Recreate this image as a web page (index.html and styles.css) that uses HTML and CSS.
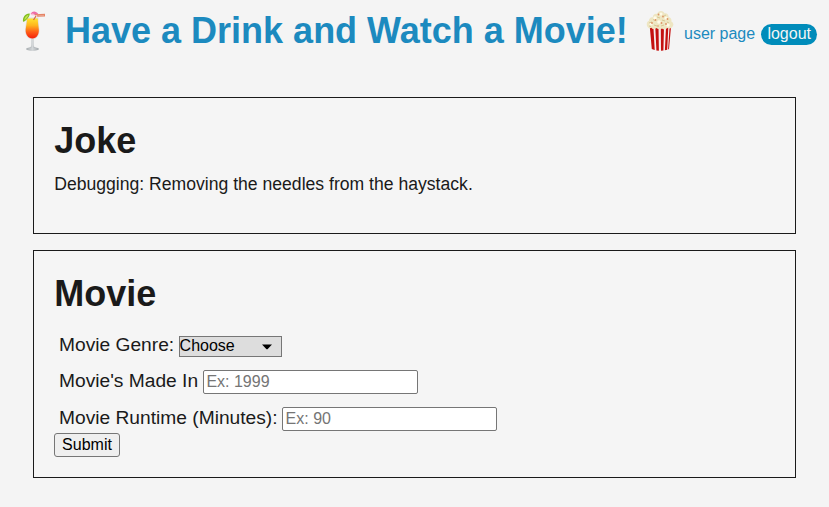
FILE: index.html
```html
<!DOCTYPE html>
<html lang="en">
<head>
<meta charset="utf-8">
<title>Have a Drink and Watch a Movie!</title>
<link rel="stylesheet" href="styles.css">
</head>
<body>
<header class="header">
  <svg class="drink" viewBox="0 0 24 42" aria-hidden="true">
    <defs>
      <linearGradient id="juice" x1="0" y1="0" x2="0" y2="1">
        <stop offset="0" stop-color="#ffe52e"/><stop offset=".35" stop-color="#ffb51d"/><stop offset=".65" stop-color="#ff6318"/><stop offset="1" stop-color="#f51f0b"/>
      </linearGradient>
      <linearGradient id="stem" x1="0" x2="1"><stop offset="0" stop-color="#a5abae"/><stop offset=".5" stop-color="#d4d7d9"/><stop offset="1" stop-color="#9fa5a9"/></linearGradient>
    </defs>
    <ellipse cx="11.500" cy="39" rx="6.400" ry="1.900" fill="url(#stem)"/>
    <path d="M10.400 28.500h2.200l.1 6c0 2 .7 3 2.200 3.500H8.100c1.500-.5 2.200-1.500 2.200-3.500z" fill="url(#stem)"/>
    <path d="M5.400 7.500h12c0 5 .7 8 1 12 .4 5.500-2.500 9.700-7 9.700S3.700 25 4.100 19.500c.3-4 1.300-7 1.300-12z" fill="#dedcd8"/>
    <path d="M6 8.500h10.800c0 5 .7 7.500 1 11 .4 5-2.200 8.900-6.400 8.900S4.300 24.500 4.700 19.500c.3-3.500 1.300-6 1.300-11z" fill="url(#juice)"/>
    <path d="M12.500 10l2.500-4" stroke="#d8664c" stroke-width="1.300"/>
    <path d="M2 11.800C1.500 7 4.300 3.200 8.700 3.500c.3 1.800-1 3.500-2.400 5.200-1.200 1.500-2.600 2.700-4.300 3.100z" fill="#7fbd1d"/>
    <path d="M3.400 10.200c0-2.700 1.600-4.800 4.200-5.400-.6 1.900-2.200 4.300-4.200 5.400z" fill="#c3e453"/>
    <path d="M9.500 4C11.500.5 15 .8 17.400 4.300l-3.400.7z" fill="#ee6da5"/>
    <path d="M9.500 4c1.800-1 3.500-.7 4.500 1.500l-3.500-.2z" fill="#fbc0d6"/>
    <path d="M14 4.800l9.600-.4v1.400l-7.500.4" fill="none" stroke="#e58466" stroke-width="1.200"/>
  </svg>
  <h1 class="title">Have a Drink and Watch a Movie!</h1>
  <svg class="popcorn" viewBox="0 0 28 42" aria-hidden="true">
    <path d="M3.800 17h21.200l-2 22Q14.400 42.500 5.800 39z" fill="#f7eeee"/>
    <path d="M3.800 17h3.600l1.300 23q-1.700-.4-2.900-1zM9.300 17h3.200l.4 23.700-2.500-.3zM14.800 17H18l-.6 23.500-2.400.2zM20 17h2.300l-1.100 22.700-2.300.5zM23.600 17H25l-2 22-.9.400z" fill="#c4110f"/>
    <path d="M2.300 17.700C-.2 15.500.6 11.300 3 10.700c-.2-2.300 2-3.900 3.800-3.300.1-2.800 2.200-4.100 4.200-3.400 1.200-3.400 5.700-4.400 7.500-.7 2.600-.6 4.500 1.300 4 3.900 2.500.2 3.400 2.200 2.800 4.200 2.500 1.200 2.800 4.500.5 6.100-1.200 1.300-3.400 1.300-4.500.6-1.500 1.600-4 1.600-5.300.3-2 1.300-4.300 1-5.500-.3-2.400 1.500-4.200 1-5-.3-1.300.7-2.300.5-3.200-.1z" fill="#eee6c3"/>
    <g fill="#fffbe8"><circle cx="9" cy="8" r="1.700"/><circle cx="15" cy="4" r="1.500"/><circle cx="20" cy="8" r="1.600"/><circle cx="5" cy="14" r="1.600"/><circle cx="13" cy="12" r="1.800"/><circle cx="22" cy="15" r="1.700"/></g>
    <path d="M3 13l3-1M7 9.500l2 1M11 7l3 1M18 6l2-1M16 10l3 1M8 15l3 1M15 16l3-1M21 12l2 1M3 16l2 .5" fill="none" stroke="#d0c088" stroke-width=".8"/>
    <g fill="#dc9464"><circle cx="12.500" cy="4.500" r=".9"/><circle cx="17" cy="6.500" r=".9"/><circle cx="21.500" cy="9" r=".9"/><circle cx="9.500" cy="10" r=".9"/><circle cx="15.500" cy="13" r=".9"/><circle cx="6" cy="13" r=".9"/><circle cx="20" cy="14" r=".9"/><circle cx="12" cy="16" r=".8"/></g>
  </svg>
  <a class="user">user page</a>
  <a class="logout">logout</a>
</header>
<main>
  <section class="card joke">
    <h2>Joke</h2>
    <p>Debugging: Removing the needles from the haystack.</p>
  </section>
  <section class="card movie">
    <h2>Movie</h2>
    <form>
      <div class="row genre"><label for="genre">Movie Genre:</label>
        <div class="select" id="genre"><span>Choose</span><svg viewBox="0 0 10 6" aria-hidden="true"><path d="M0 .5h10L5.500 5.200h-1z"/></svg></div>
      </div>
      <div class="row year"><label for="year">Movie's Made In</label><input id="year" placeholder="Ex: 1999"></div>
      <div class="row runtime"><label for="runtime">Movie Runtime (Minutes):</label><input id="runtime" placeholder="Ex: 90"></div>
      <button type="button">Submit</button>
    </form>
  </section>
</main>
</body>
</html>
```
FILE: styles.css
```css
* { box-sizing: border-box; }
body {
  margin: 0;
  background: #f4f4f4;
  color: #1a1a1a;
  font: 16px "Liberation Sans", Arial, sans-serif;
}
.header {
  display: flex;
  align-items: flex-start;
  height: 97px;
  padding: 10px 0 0 21px;
  color: #1c8abf;
}
.drink { width: 24px; height: 42px; }
.title {
  margin: 0 0 0 20px;
  width: 563px;
  font-size: 36px;
  line-height: 41px;
  white-space: nowrap;
}
.popcorn { width: 28px; height: 42px; margin-left: 18px; }
.user { margin: 15px 0 0 10px; line-height: 18px; white-space: nowrap; }
.logout {
  margin: 14px 0 0 6px;
  width: 56px;
  height: 21px;
  border-radius: 11px;
  background: #008cba;
  color: #f4f4f4;
  line-height: 20px;
  text-align: center;
}
.card {
  margin: 0 33px 16px;
  padding: 22px 20px 0;
  border: 1px solid #1a1a1a;
  background: #f5f5f5;
}
.joke { height: 137px; }
.movie { height: 228px; }
h2 { margin: 0; padding-left: 0.2px; font-size: 36px; line-height: 41px; }
p { margin: 13px 0 0; padding-left: 0.2px; font-size: 17.6px; line-height: 20px; }
form { padding-top: 21px; }
.row { display: flex; padding-left: 5px; font-size: 19.2px; line-height: 22px; }
.row label { margin-right: 5px; white-space: nowrap; }
.genre { height: 34px; align-items: flex-start; }
.genre label { margin-top: -1px; }
.select {
  display: flex;
  justify-content: space-between;
  margin-top: 1px;
  width: 103px;
  height: 21px;
  border: 1px solid #767676;
  background: #ddd;
  color: #000;
  font-size: 16px;
  line-height: 18px;
}
.select span { margin-left: -0.6px; }
.select svg { width: 10px; height: 6px; margin: 7px 9px 0 0; }
.year { height: 37px; }
.year label { margin-top: 1px; }
.runtime { height: 27px; }
.runtime label { margin-top: 1px; margin-right: 4px; }
input {
  margin: 1px 0 0;
  width: 215px;
  height: 24px;
  padding: 1px 2px 1px 2.3px;
  border: 1px solid #767676;
  border-radius: 2px;
  background: #fff;
  font: 16px "Liberation Sans", Arial, sans-serif;
}
.runtime input { padding-left: 3px; }
input::placeholder { color: #757575; }
button {
  display: block;
  width: 66px;
  height: 24px;
  padding: 0;
  border: 1px solid #767676;
  border-radius: 3px;
  background: #efefef;
  color: #000;
  font: 16px "Liberation Sans", Arial, sans-serif;
}
```
